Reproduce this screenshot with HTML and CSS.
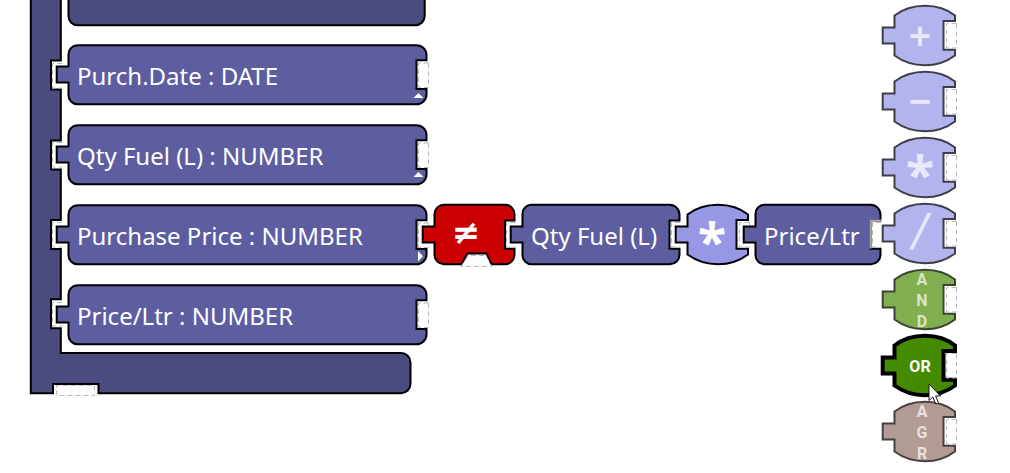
FILE: index.html
```html
<!DOCTYPE html>
<html lang="en">
<head>
<meta charset="utf-8">
<title>Rule blocks</title>
<link rel="stylesheet" href="styles.css">
</head>
<body>
<svg class="defs" aria-hidden="true">
  <symbol id="field" overflow="visible">
    <path class="shape" d="M21.5 1.2H360.5A10 10 0 0 1 370.5 11V16.3H360.5V45H370.5V50.5A10 10 0 0 1 360.5 60.3H21.5A9 9 0 0 1 12.5 51V38.5H.7V22.5H12.5V10.5A9 9 0 0 1 21.5 1.2Z"/>
    <path class="slot" d="M372.5 19V43.5H362.5V19Z"/>
  </symbol>
  <symbol id="operator" overflow="visible">
    <path class="shape" d="M12.5 10.5Q25 .7 43 .7T73 10.5V16H61.5V44.7H73V50.5Q60 60.3 43 60.3T12.5 50.5V38.5H.7V22.5H12.5Z"/>
    <path class="slot" d="M74.5 18.5V43H64.5V18.5Z"/>
  </symbol>
</svg>
<main class="workspace">
  <section class="program" aria-label="Program">
    <svg class="frame" aria-hidden="true">
      <path class="shape" d="M30.8 -4V393.3H53V384H98.5V393.3H401A9.5 9.5 0 0 0 410.5 384V362.5A9.5 9.5 0 0 0 401 353H60.8V328.3H51V299.3H60.8V249H51V220H60.8V169.5H51V140.5H60.8V89.5H51V60.5H60.8V-4Z"/>
      <path class="shape" d="M68.5 -4V16A9 9 0 0 0 77.5 25.3H415.5A9.5 9.5 0 0 0 424.7 16V-4Z"/>
      <path class="slot" d="M62 63.5H52.5V88H62M62 142.5H52.5V167H62M62 222.5H52.5V247H62M62 302.5H52.5V326H62M56.5 395.5V385.5H94.5V395.5Z"/>
    </svg>
    <div class="row">
      <div class="block field">
        <svg aria-hidden="true"><use href="#field"/><path class="arrow" d="M357.5 54L362.5 49L367.5 54Z"/></svg>
        <span class="label">Purch.Date : DATE</span>
      </div>
    </div>
    <div class="row">
      <div class="block field">
        <svg aria-hidden="true"><use href="#field"/><path class="arrow" d="M357.5 53L362.5 48L367.5 53Z"/></svg>
        <span class="label">Qty Fuel (L) : NUMBER</span>
      </div>
    </div>
    <div class="row">
      <div class="block field">
        <svg aria-hidden="true"><use href="#field"/><path class="arrow" d="M362 47V57.5L367 52.2Z"/></svg>
        <span class="label">Purchase Price : NUMBER</span>
      </div>
      <div class="block compare">
        <svg aria-hidden="true">
          <path class="shape" d="M22 .7H83A9.5 9.5 0 0 1 92.5 10V16.5H83V44.7H92.5V51A9.5 9.5 0 0 1 83 60.3H69.5L64.5 49.5H45.5L39.5 60.3H22A9.5 9.5 0 0 1 12.5 51V38.5H.7V22.5H12.5V10A9.5 9.5 0 0 1 22 .7Z"/>
          <path class="slot" d="M93.5 18.5H84.5V43H93.5M39 62.5L46.5 51.5H63.5L70 62.5Z"/>
        </svg>
        <span class="label symbol unequal">≠</span>
      </div>
      <div class="block quantity">
        <svg aria-hidden="true">
          <path class="shape" d="M21.5 .7H159.5A10 10 0 0 1 169.5 10.7V16.5H159.5V44.7H169.5V51A9.5 9.5 0 0 1 160 60.3H21.5A9 9 0 0 1 12.5 51V38.5H.7V22.5H12.5V10A9 9 0 0 1 21.5 .7Z"/>
          <path class="slot" d="M170 18.5H161.5V43H170"/>
        </svg>
        <span class="label">Qty Fuel (L)</span>
      </div>
      <div class="block multiply">
        <svg aria-hidden="true"><use href="#operator"/></svg>
        <span class="label symbol star">*</span>
      </div>
      <div class="block price">
        <svg aria-hidden="true">
          <path class="shape" d="M21.5 .7H127.5A10 10 0 0 1 137.5 10.7V16.5H127.5V44.7H137.5V51A9.5 9.5 0 0 1 128 60.3H21.5A9 9 0 0 1 12.5 51V38.5H.7V22.5H12.5V10A9 9 0 0 1 21.5 .7Z"/>
          <path class="target" d="M139 16.5H127.5V44.5"/>
          <path class="slot" d="M138 18.5H129.5V43H138"/>
        </svg>
        <span class="label">Price/Ltr</span>
      </div>
    </div>
    <div class="row">
      <div class="block field">
        <svg aria-hidden="true"><use href="#field"/></svg>
        <span class="label">Price/Ltr : NUMBER</span>
      </div>
    </div>
  </section>
  <nav class="palette" aria-label="Operators">
    <button class="block arithmetic"><svg aria-hidden="true"><use href="#operator"/></svg><span class="label symbol">+</span></button>
    <button class="block arithmetic"><svg aria-hidden="true"><use href="#operator"/></svg><span class="label symbol">−</span></button>
    <button class="block arithmetic"><svg aria-hidden="true"><use href="#operator"/></svg><span class="label symbol star">*</span></button>
    <button class="block arithmetic"><svg aria-hidden="true"><use href="#operator"/></svg><span class="label symbol slash">/</span></button>
    <button class="block and"><svg aria-hidden="true"><use href="#operator"/></svg><span class="label letters"><span>A</span><span>N</span><span>D</span></span></button>
    <button class="block or">
      <svg aria-hidden="true"><use href="#operator"/></svg>
      <span class="label word">OR</span>
      <svg class="pointer" viewBox="0 0 14 22" aria-hidden="true"><path d="M1 1V17.5L4.8 14L7.7 21L10.5 19.8L7.7 13H12.5Z"/></svg>
    </button>
    <button class="block aggregate"><svg aria-hidden="true"><use href="#operator"/></svg><span class="label letters"><span>A</span><span>G</span><span>R</span></span></button>
  </nav>
</main>
</body>
</html>
```
FILE: styles.css
```css
body {
  margin: 0;
  background: #fff;
  font-family: "Noto Sans", "Open Sans", sans-serif;
}

.defs {
  position: absolute;
  width: 0;
  height: 0;
}

.workspace {
  display: flex;
  align-items: flex-start;
  gap: 1px;
  box-sizing: border-box;
  min-height: 100vh;
}

.program {
  position: relative;
  flex: none;
  display: flex;
  flex-direction: column;
  gap: 20px;
  padding: 44px 0 0 56px;
}

.frame {
  position: absolute;
  top: 0;
  left: 0;
  width: 430px;
  height: 400px;
  fill: #4b4b7f;
}

.row {
  position: relative;
  display: flex;
}

.block {
  flex: none;
  display: grid;
  grid-template-rows: 60px;
  align-items: start;
  height: 60px;
  padding: 0;
  border: 0;
  background: none;
  color: #fff;
  fill: #5d5da0;
  font-family: inherit;
  font-size: 24px;
}

.block > svg,
.block > .label {
  grid-area: 1 / 1;
}

.block > svg {
  width: 100%;
  height: 60px;
  overflow: visible;
}

.row .block + .block {
  margin-left: -4px;
}

.field { width: 370px; }
.compare { width: 92px; fill: #cb0000; }
.quantity { width: 169px; }
.multiply { width: 72px; fill: #9797e6; }
.price { width: 138px; }

.label {
  padding-left: 21px;
  line-height: 63px;
  white-space: nowrap;
}

.shape {
  stroke: var(--edge, #000);
  stroke-width: var(--edge-width, 2px);
}

.slot {
  fill: none;
  stroke: #b9b9b9;
  stroke-width: 1px;
  stroke-dasharray: 5 3;
}

.target {
  fill: none;
  stroke: #aaa;
  stroke-width: 2px;
}

.arrow { fill: #fff; }

.symbol {
  padding: 0 0 0 4px;
  justify-self: center;
  line-height: 60px;
  font-size: 40px;
  font-weight: 600;
}

.unequal {
  padding: 0 4px 0 0;
  font-family: "DejaVu Sans", sans-serif;
  font-size: 34px;
  font-weight: 700;
  line-height: 56px;
}

.multiply .symbol { padding: 0 0 0 2px; }

.star {
  font-size: 52px;
  font-weight: 700;
  line-height: 74px;
}

.slash {
  font-family: "DejaVu Sans", sans-serif;
  font-size: 44px;
  font-style: italic;
  font-weight: 400;
  line-height: 56px;
}

.palette {
  flex: none;
  display: flex;
  flex-direction: column;
  gap: 6px;
  padding-top: 5px;
}

.palette .block {
  position: relative;
  width: 76px;
  cursor: pointer;
}

.arithmetic {
  --edge: #3e3e48;
  fill: #b3b3ed;
}

.palette .arithmetic { color: #e8e8fa; }
.palette .symbol { padding: 0; }

.palette .and {
  --edge: #3b4333;
  fill: #81af4f;
  color: #d8e7c9;
}

.palette .or {
  --edge-width: 4px;
  fill: #458b00;
}

.palette .aggregate {
  --edge: #464140;
  fill: #b29b95;
  color: #e8e1df;
}

.word,
.letters {
  justify-self: center;
  padding: 0;
  font-family: Roboto, sans-serif;
  font-size: 16px;
  font-weight: 700;
}

.letters {
  display: grid;
  padding-left: 4px;
  justify-items: center;
  line-height: 21px;
}

.block > .pointer {
  position: absolute;
  z-index: 1;
  left: 46px;
  top: 48px;
  width: 14px;
  height: 22px;
  fill: #fff;
  stroke: #111;
  stroke-width: 1px;
}
```
